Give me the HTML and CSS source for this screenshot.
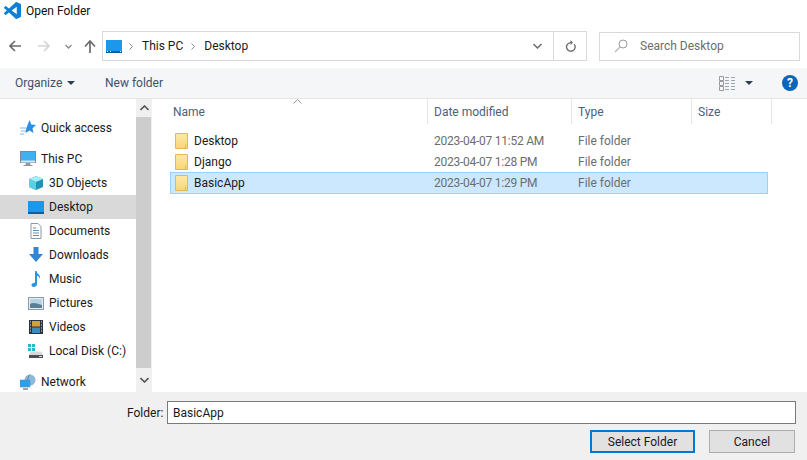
FILE: index.html
```html
<!DOCTYPE html>
<html lang="en">
<head>
<meta charset="utf-8">
<title>Open Folder</title>
<link rel="stylesheet" href="styles.css">
</head>
<body>
<div class="dialog">
  <header class="titlebar">
    <svg class="logo" viewBox="0 0 24 24" width="17" height="17"><path fill="#0f7fd6" d="M23.15 2.587 18.21.21a1.494 1.494 0 0 0-1.705.29l-9.46 8.63-4.12-3.128a.999.999 0 0 0-1.276.057L.327 7.261A1 1 0 0 0 .326 8.74L3.899 12 .326 15.26a1 1 0 0 0 .001 1.479L1.65 17.94a.999.999 0 0 0 1.276.057l4.12-3.128 9.46 8.63a1.492 1.492 0 0 0 1.704.29l4.942-2.377A1.5 1.500 0 0 0 24 20.06V3.939a1.500 1.500 0 0 0-.85-1.352zm-5.146 14.861L10.826 12l7.178-5.448v10.896z"/></svg>
    <span class="title">Open Folder</span>
  </header>

  <div class="navrow">
    <div class="navbtns">
      <svg class="nav nav-back" viewBox="0 0 12 12" width="12" height="12"><path d="M6 1 1 6l5 5M1 6h11" fill="none" stroke="#6b6b6b" stroke-width="1.6"/></svg>
      <svg class="nav nav-fwd" viewBox="0 0 12 12" width="12" height="12"><path d="m6 1 5 5-5 5M11 6H0" fill="none" stroke="#d4d4d4" stroke-width="1.6"/></svg>
      <svg class="nav nav-down" viewBox="0 0 7 5" width="7" height="5"><path d="m.5 1 3 3 3-3" fill="none" stroke="#8a8a8a" stroke-width="1.3"/></svg>
      <svg class="nav nav-up" viewBox="0 0 12 13" width="12" height="13"><path d="M1 6.500 6 1l5 5.500M6 1v12" fill="none" stroke="#6b6b6b" stroke-width="1.700"/></svg>
    </div>
    <div class="address">
      <svg class="addr-icon" viewBox="0 0 16 13" width="16" height="13"><rect width="16" height="12" fill="#1c97ea"/><rect y="11" width="16" height="2" fill="#0b5f9e"/><path d="M1 11.500h1m2 0h1m9 0h1" stroke="#fff"/></svg>
      <svg class="crumb-sep" viewBox="0 0 4 7" width="4" height="7"><path d="m.5.500 3 3-3 3" fill="none" stroke="#8a8a8a"/></svg>
      <span class="crumb">This PC</span>
      <svg class="crumb-sep" viewBox="0 0 4 7" width="4" height="7"><path d="m.5.500 3 3-3 3" fill="none" stroke="#8a8a8a"/></svg>
      <span class="crumb">Desktop</span>
      <span class="grow"></span>
      <svg class="addr-down" viewBox="0 0 9 6" width="9" height="6"><path d="m.5 1 4 4 4-4" fill="none" stroke="#6b6b6b" stroke-width="1.500"/></svg>
      <span class="refresh"><svg viewBox="0 0 11 12" width="11" height="12"><path d="M9.200 4.200A4.300 4.300 0 1 1 5.500 2.600H7" fill="none" stroke="#6e6e6e" stroke-width="1.400"/><path d="M5.500 0 8 2.600 5.500 5z" fill="#6e6e6e"/></svg></span>
    </div>
    <div class="search">
      <svg viewBox="0 0 14 14" width="14" height="14"><circle cx="9" cy="5" r="4" fill="none" stroke="#9a9a9a"/><path d="M6 8 1 13" stroke="#b5b5b5" stroke-width="1.200"/></svg>
      <span>Search Desktop</span>
    </div>
  </div>

  <div class="toolbar">
    <span class="tool tool-org">Organize<i class="caret"></i></span>
    <span class="tool tool-new">New folder</span>
    <span class="grow"></span>
    <svg class="view-icon" viewBox="0 0 16 16" width="16" height="16"><path d="M.5 1.500h4v4h-4zM.5 6.500h4v4h-4zM.5 11.500h4v4h-4z" fill="none" stroke="#9a9a9a"/><path d="M6 2.500h4m2 0h4M6 5.500h4m2 0h4M6 8.500h4m2 0h4M6 11.500h4m2 0h4M6 14.500h4m2 0h4" stroke="#9aa5b1"/></svg>
    <i class="caret caret-view"></i>
    <span class="help">?</span>
  </div>

  <main class="body">
    <nav class="sidebar">
      <div class="side-row side-top">
        <svg viewBox="0 0 16 16" width="16" height="16"><path d="m9.500 0 1.800 4.500L16 5l-3.500 3.200 1 4.800-4-2.500-4 2.500.8-4.800z" fill="#2a8fe0"/><path d="M0 8h6M1 11h5M0 14h4" stroke="#7cb8e8"/></svg>
        <span>Quick access</span>
      </div>
      <div class="side-row side-top side-gap">
        <svg viewBox="0 0 16 16" width="16" height="16"><rect x=".5" y=".5" width="15" height="11" fill="#3fb0f0" stroke="#7a8a99"/><rect x="1" y="9.500" width="14" height="2" fill="#d7e6f0"/><path d="M6 12.500h4v1.500H6zM3.500 14.500h9" fill="#8a9aa8" stroke="#8a9aa8"/></svg>
        <span>This PC</span>
      </div>
      <div class="side-row">
        <svg viewBox="0 0 16 16" width="16" height="16"><path d="M8 1 15 4v8l-7 3-7-3V4z" fill="#1f93b8"/><path d="M1 4l7 3 7-3-7-3z" fill="#a6ecf5"/><path d="M1 4l7 3v8l-7-3z" fill="#5cd0e3"/></svg>
        <span>3D Objects</span>
      </div>
      <div class="side-row side-active">
        <svg viewBox="0 0 16 13" width="16" height="13"><rect width="16" height="12" fill="#1c97ea"/><rect y="11" width="16" height="2" fill="#0b5f9e"/></svg>
        <span>Desktop</span>
      </div>
      <div class="side-row">
        <svg viewBox="0 0 16 16" width="16" height="16"><path d="M3 .5h7l3 3v12H3z" fill="#fff" stroke="#8a98a6"/><path d="M5 5h3M5 7.500h6M5 10h6M5 12.500h6" stroke="#5f8fb4"/></svg>
        <span>Documents</span>
      </div>
      <div class="side-row">
        <svg viewBox="0 0 16 16" width="16" height="16"><path d="M5.500 0h5v7H15l-7 8-7-8h4.500z" fill="#2f85d6"/></svg>
        <span>Downloads</span>
      </div>
      <div class="side-row">
        <svg viewBox="0 0 16 16" width="16" height="16"><path d="M7 0h1.500c.3 3 4.500 3.500 3.500 8-.4-2-1.800-3-3-3.200V13c0 1.700-1.500 3-3.300 3C4.300 16 3.500 15 3.500 14c0-1.500 1.700-2.500 3.500-2.200z" fill="#2a93e0"/></svg>
        <span>Music</span>
      </div>
      <div class="side-row">
        <svg viewBox="0 0 16 13" width="16" height="13"><rect x=".5" y=".5" width="15" height="12" fill="#e8eef3" stroke="#8a9aa8"/><rect x="2" y="2" width="12" height="9" fill="#b9d3e6"/><path d="M2 7c3-2 6-1 12 1v3H2z" fill="#5c7f95"/></svg>
        <span>Pictures</span>
      </div>
      <div class="side-row">
        <svg viewBox="0 0 16 16" width="16" height="16"><rect x="1" y="1" width="14" height="14" fill="#2d3440"/><rect x="4" y="2" width="8" height="5.500" fill="#d3a32e"/><rect x="4" y="8.500" width="8" height="5.500" fill="#3f88b8"/><path d="M2 3h1M2 6h1M2 9h1M2 12h1M13 3h1M13 6h1M13 9h1M13 12h1" stroke="#e6e6e6"/></svg>
        <span>Videos</span>
      </div>
      <div class="side-row">
        <svg viewBox="0 0 16 16" width="16" height="16"><path d="M0 1h3v3H0zM4 1h3v3H4zM0 5h3v3H0zM4 5h3v3H4z" fill="#2fb5c9"/><path d="M3 8.500h10l2 3.500H1z" fill="#d5d9dc"/><rect x="1" y="12" width="14" height="3" fill="#4b5057"/><path d="M11 13.500h3" stroke="#d5d9dc"/></svg>
        <span>Local Disk (C:)</span>
      </div>
      <div class="side-row side-top side-gap">
        <svg viewBox="0 0 16 16" width="16" height="16"><circle cx="10" cy="6" r="5.500" fill="#8fb9d8"/><path d="M10 .5c-3 3-3 8 0 11" fill="none" stroke="#4b87b5"/><rect x="0" y="6" width="10" height="7" fill="#2aa0ea" stroke="#5f8fb4" stroke-width=".6"/><path d="M3 15h5" stroke="#7a8a99" stroke-width="1.500"/></svg>
        <span>Network</span>
      </div>
    </nav>

    <div class="scrollbar">
      <span class="scroll-btn"><svg viewBox="0 0 9 6" width="9" height="6"><path d="m.5 5 4-4 4 4" fill="none" stroke="#555" stroke-width="1.600"/></svg></span>
      <span class="scroll-thumb"></span>
      <span class="scroll-btn scroll-btn-down"><svg viewBox="0 0 9 6" width="9" height="6"><path d="m.5 1 4 4 4-4" fill="none" stroke="#555" stroke-width="1.600"/></svg></span>
    </div>

    <section class="files">
      <div class="head">
        <svg class="sort" viewBox="0 0 9 5" width="9" height="5"><path d="m.5 4.500 4-4 4 4" fill="none" stroke="#9a9a9a"/></svg>
        <span class="col col-name">Name</span>
        <span class="col col-date">Date modified</span>
        <span class="col col-type">Type</span>
        <span class="col col-size">Size</span>
      </div>
      <div class="rows">
        <div class="row">
          <span class="cell-name"><svg class="folder" viewBox="0 0 13 16" width="13" height="16"><use href="#folder"/></svg>Desktop</span>
          <span class="cell-date">2023-04-07 11:52 AM</span>
          <span class="cell-type">File folder</span>
        </div>
        <div class="row">
          <span class="cell-name"><svg class="folder" viewBox="0 0 13 16" width="13" height="16"><use href="#folder"/></svg>Django</span>
          <span class="cell-date">2023-04-07 1:28 PM</span>
          <span class="cell-type">File folder</span>
        </div>
        <div class="row row-selected">
          <span class="cell-name"><svg class="folder" viewBox="0 0 13 16" width="13" height="16"><use href="#folder"/></svg>BasicApp</span>
          <span class="cell-date">2023-04-07 1:29 PM</span>
          <span class="cell-type">File folder</span>
        </div>
      </div>
    </section>
  </main>

  <footer class="footer">
    <div class="folder-line">
      <label class="folder-label" for="folder-name">Folder:</label>
      <input class="folder-input" id="folder-name" value="BasicApp">
    </div>
    <div class="actions">
      <button class="btn btn-primary">Select Folder</button>
      <button class="btn btn-cancel">Cancel</button>
    </div>
  </footer>
</div>
<svg class="defs" width="0" height="0"><defs><linearGradient id="fg" x1="0" y1="0" x2="0" y2="1"><stop offset="0" stop-color="#fde9a6"/><stop offset="1" stop-color="#f8d674"/></linearGradient><g id="folder"><path d="M.5.500h12v15H.5z" fill="url(#fg)" stroke="#e3b858"/><path d="M10.500 11.500v4" stroke="#e3b858"/></g></defs></svg>
</body>
</html>
```

FILE: styles.css
```css
* { box-sizing: border-box; }
html, body { margin: 0; padding: 0; }
body {
  width: 807px;
  height: 460px;
  overflow: hidden;
  background: #fff;
  font-family: Roboto, "Noto Sans", sans-serif;
  font-size: 12px;
  color: #1a1a1a;
}
svg { display: block; flex: none; }
.defs { position: absolute; }
.dialog { display: flex; flex-direction: column; height: 460px; }
.grow { flex: 1; }

.titlebar { height: 31px; display: flex; align-items: flex-start; padding: 2px 0 0 4px; gap: 5px; }
.title { line-height: 18px; color: #111; }

.navrow { height: 30px; display: flex; align-items: center; }
.navbtns { width: 102px; display: flex; align-items: center; padding-left: 9px; }
.nav-fwd { margin-left: 17px; }
.nav-down { margin-left: 15px; }
.nav-up { margin-left: 12px; }
.address {
  width: 485px; height: 30px;
  border: 1px solid #d9d9d9;
  display: flex; align-items: center;
  padding-left: 3px;
  color: #1a1a1a;
}
.addr-icon { margin-right: 7px; }
.crumb { margin: 0 8px 0 9px; }
.addr-down { margin-right: 11px; }
.refresh {
  width: 33px; height: 28px;
  border-left: 1px solid #d9d9d9;
  display: flex; align-items: center; justify-content: center;
}
.search {
  width: 201px; height: 29px;
  margin-left: 12px;
  border: 1px solid #d9d9d9;
  display: flex; align-items: center;
  padding-left: 14px;
  gap: 12px;
  color: #6d6d6d;
}

.toolbar {
  height: 30px; margin-top: 7px;
  background: #f5f6f7;
  display: flex; align-items: center;
  padding: 0 9px 0 15px;
  color: #3f5068;
}
.tool { display: flex; align-items: center; }
.tool-org { width: 90px; }
.caret {
  display: block;
  border-left: 4px solid transparent;
  border-right: 4px solid transparent;
  border-top: 4px solid #2f3e54;
  margin-left: 5px;
}
.view-icon { margin-right: 5px; }
.caret-view { margin: 0 29px 0 5px; }
.help {
  width: 16px; height: 16px; border-radius: 50%;
  background: #0a67b8; color: #fff;
  font-weight: 700; font-size: 12px; line-height: 16px; text-align: center;
}

.body { height: 294px; display: flex; border-top: 1px solid #e5e5e5; }
.sidebar { width: 136px; padding-top: 17px; display: flex; flex-direction: column; overflow: hidden; }
.side-row { flex: none; height: 24px; display: flex; align-items: center; padding-left: 28px; gap: 5px; }
.side-row svg { width: 16px; }
.side-top { padding-left: 20px; }
.side-gap { margin-top: 7px; }
.side-active { background: #d9d9d9; }

.scrollbar { width: 16px; background: #f0f0f0; display: flex; flex-direction: column; }
.scroll-btn { height: 18px; display: flex; align-items: center; justify-content: center; }
.scroll-btn-down { height: 24px; }
.scroll-thumb { flex: 1; width: 15px; background: #cdcdcd; }

.files { flex: 1; min-width: 0; }
.head { position: relative; display: flex; height: 25px; padding-left: 14px; color: #4c607a; }
.sort { position: absolute; left: 141px; top: 0; }
.col { display: flex; align-items: center; height: 25px; border-right: 1px solid #e5e5e5; padding-left: 6px; }
.col-name { width: 262px; padding-left: 7px; }
.col-date { width: 144px; }
.col-type { width: 120px; }
.col-size { width: 80px; }
.rows { margin-left: 18px; margin-top: 6px; width: 598px; }
.row { display: flex; height: 21px; align-items: center; border: 1px solid transparent; }
.row-selected { height: 22px; padding-bottom: 1px; background: #cce8ff; border-color: #99d1ff; }
.cell-name { width: 263px; display: flex; align-items: center; padding-left: 4px; gap: 6px; }
.cell-date { width: 144px; color: #6d6d6d; letter-spacing: -0.25px; }
.cell-type { color: #6d6d6d; }

.footer { flex: 1; background: #f0f0f0; display: flex; flex-direction: column; }
.folder-line { display: flex; align-items: center; padding: 9px 0 0 127px; gap: 5px; }
.folder-label { width: 35px; white-space: nowrap; }
.folder-input {
  width: 629px; height: 23px;
  border: 1px solid #7a7a7a;
  background: #fff;
  padding: 0 5px;
  font: inherit; color: #1a1a1a;
  outline: none;
}
.actions { display: flex; justify-content: flex-end; gap: 14px; padding: 6px 12px 0 0; }
.btn { height: 23px; font: inherit; color: #1a1a1a; background: #e1e1e1; border: 1px solid #adadad; padding: 0; }
.btn-primary { width: 105px; border: 2px solid #0078d7; }
.btn-cancel { width: 86px; }
```
